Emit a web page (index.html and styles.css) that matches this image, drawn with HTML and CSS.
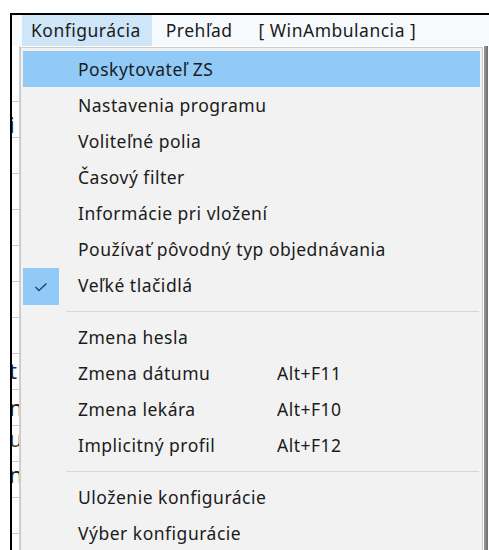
FILE: index.html
```html
<!DOCTYPE html>
<html lang="sk">
<head>
<meta charset="utf-8">
<title>WinAmbulancia – Konfigurácia</title>
<link rel="stylesheet" href="styles.css">
</head>
<body>
<div class="window">
  <div class="menubar">
    <span class="bar-item open">Konfigurácia</span>
    <span class="bar-item">Prehľad</span>
    <span class="bar-item title">[ WinAmbulancia ]</span>
  </div>
  <div class="workarea">
    <div class="app-edge">
      <span class="frag f1">i</span>
      <span class="frag f2">t</span>
      <span class="frag f3">n</span>
      <span class="frag f4">u</span>
      <span class="frag f5">n</span>
    </div>
    <ul class="menu">
      <li class="item active"><span class="label">Poskytovateľ ZS</span></li>
      <li class="item"><span class="label">Nastavenia programu</span></li>
      <li class="item"><span class="label">Voliteľné polia</span></li>
      <li class="item"><span class="label">Časový filter</span></li>
      <li class="item"><span class="label">Informácie pri vložení</span></li>
      <li class="item"><span class="label">Používať pôvodný typ objednávania</span></li>
      <li class="item checked">
        <span class="check"><svg width="14" height="10" viewBox="0 0 14 10"><path d="M1.5 5 L5 8.5 L12.5 1.5" fill="none" stroke="#25496b" stroke-width="1.6"/></svg></span>
        <span class="label">Veľké tlačidlá</span>
      </li>
      <li class="sep"></li>
      <li class="item"><span class="label">Zmena hesla</span></li>
      <li class="item"><span class="label">Zmena dátumu</span><span class="key">Alt+F11</span></li>
      <li class="item"><span class="label">Zmena lekára</span><span class="key">Alt+F10</span></li>
      <li class="item"><span class="label">Implicitný profil</span><span class="key">Alt+F12</span></li>
      <li class="sep"></li>
      <li class="item"><span class="label">Uloženie konfigurácie</span></li>
      <li class="item"><span class="label">Výber konfigurácie</span></li>
    </ul>
    <div class="app-right"></div>
  </div>
</div>
</body>
</html>
```

FILE: styles.css
```css
html, body {
  margin: 0;
  padding: 0;
  background: #ffffff;
  overflow: hidden;
}

body {
  font-family: "Noto Sans", "Open Sans", sans-serif;
  font-size: 17.5px;
  letter-spacing: 0.5px;
  color: #1b1b1b;
}

.window {
  margin: 13px 0 0 10px;
  border-top: 2px solid #000;
  border-left: 2px solid #000;
  height: 580px;
}

/* top menu bar */
.menubar {
  display: flex;
  align-items: stretch;
  height: 31px;
  background: #f7fafd;
  padding-left: 10px;
}

.bar-item {
  display: flex;
  align-items: center;
  padding: 0 7px;
  line-height: 1;
}

.bar-item.open {
  padding: 0 11px 0 9px;
  background: #cfe5f8;
}

.bar-item + .bar-item {
  margin-left: 7px;
}

.bar-item.title {
  margin-left: 12px;
}

/* area under the bar: app behind + dropdown */
.workarea {
  display: flex;
  align-items: flex-start;
  height: 560px;
}

.app-edge {
  position: relative;
  width: 7px;
  height: 100%;
  background: #ffffff;
  border-right: 1px solid #d0d0d0;
  overflow: hidden;
  background-image: repeating-linear-gradient(to bottom, transparent 0, transparent 35px, #c8c8c8 35px, #c8c8c8 36px);
  background-position: 0 20px;
}

.frag {
  position: absolute;
  left: -3px;
  font-size: 22px;
  color: #222;
  line-height: 1;
}
.f1 { top: 67px; }
.f2 { top: 313px; color: #1a2a6a; }
.f3 { top: 350px; }
.f4 { top: 381px; color: #3a3a20; }
.f5 { top: 417px; }

.menu {
  list-style: none;
  margin: 1px 0 0 0;
  padding: 3px 2px 40px;
  width: 457px;
  background: #f2f2f2;
  border: 1px solid #cccccc;
}

.item {
  position: relative;
  display: flex;
  align-items: center;
  height: 36px;
  padding-left: 55px;
}

.item.active {
  background: #91c9f7;
}

.label {
  width: 144px;
  white-space: nowrap;
}

.key {
  margin-left: 55px;
}

.check {
  position: absolute;
  left: 0;
  top: 1px;
  width: 36px;
  height: 37px;
  background: #91c9f7;
  display: flex;
  align-items: center;
  justify-content: center;
}

.sep {
  height: 1px;
  background: #d7d7d7;
  margin: 8px 1px 7px 43px;
}

.app-right {
  width: 4px;
  height: 100%;
  margin-left: 1px;
  background: linear-gradient(to right, #9a9a9a, #6c6c6c);
}
```
